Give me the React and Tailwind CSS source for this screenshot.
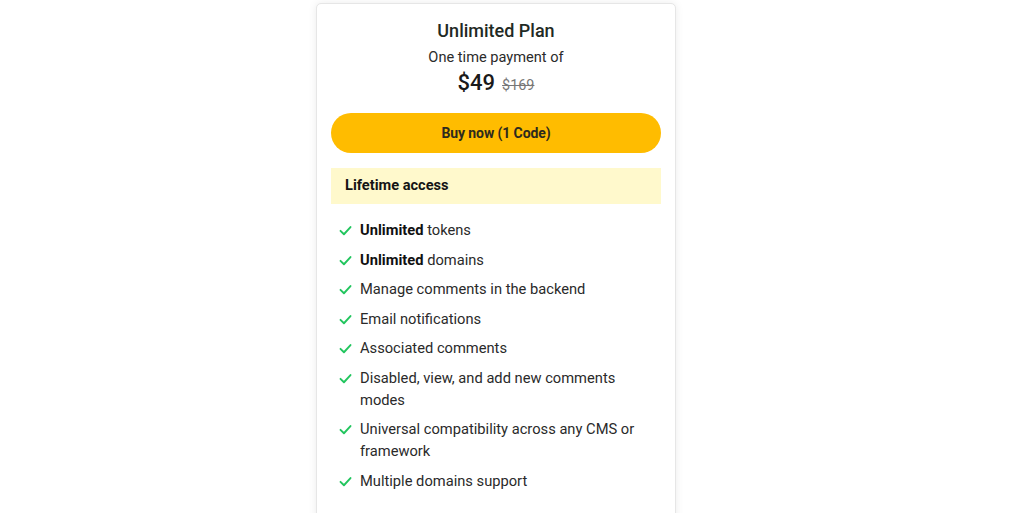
import React from "react";

const features = [
  { bold: "Unlimited", text: " tokens" },
  { bold: "Unlimited", text: " domains" },
  { text: "Manage comments in the backend" },
  { text: "Email notifications" },
  { text: "Associated comments" },
  { text: "Disabled, view, and add new comments modes" },
  { text: "Universal compatibility across any CMS or framework" },
  { text: "Multiple domains support" },
];

const Check = () => (
  <svg
    width="15"
    height="15"
    viewBox="0 0 24 24"
    fill="none"
    stroke="#22c55e"
    strokeWidth="3"
    strokeLinecap="round"
    strokeLinejoin="round"
    className="mt-[4px] shrink-0"
  >
    <polyline points="4 12.5 9.5 18 20 6.5" />
  </svg>
);

export default function App() {
  return (
    <div
      className="w-[1024px] h-[513px] overflow-hidden bg-white flex justify-center pr-[32px]"
      style={{ fontFamily: "Roboto, 'Liberation Sans', sans-serif" }}
    >
      <div className="mt-[3px] w-[360px] h-[530px] shrink-0 bg-white border border-[#e6e6e6] rounded-[5px] shadow-[0_0_8px_rgba(0,0,0,0.08)] px-[14px] pt-[13px]">
        <div className="flex flex-col items-center text-[#1f2a24]">
          <h2 className="text-[18px] leading-[28px] font-medium">Unlimited Plan</h2>
          <p className="mt-[2px] text-[14.6px] leading-[20px] text-[#2b2b2b]">One time payment of</p>
          <div className="mt-[2px] flex items-baseline gap-[7px]">
            <span className="text-[22px] leading-[28px] font-medium text-[#1a1a1a]">$49</span>
            <span className="text-[14.4px] line-through text-[#777]">$169</span>
          </div>
        </div>
        <button className="mt-[16px] w-full h-[40px] rounded-full bg-[#ffbc00] text-[14px] font-bold text-[#2d2a1e] tracking-[-0.1px]">
          Buy now (1 Code)
        </button>
        <div className="mt-[15px] h-[36px] bg-[#fff9cc] flex items-center px-[14px] text-[14.6px] font-bold text-[#141414]">
          Lifetime access
        </div>
        <ul className="mt-[15px] flex flex-col gap-[7.5px] pl-[7px] pr-[16px]">
          {features.map((f, i) => (
            <li key={i} className="flex gap-[7px] text-[14.7px] leading-[22px] text-[#2a2a2a]">
              <Check />
              <span>
                {f.bold && <strong className="font-bold text-[#111]">{f.bold}</strong>}
                {f.text}
              </span>
            </li>
          ))}
        </ul>
      </div>
    </div>
  );
}
